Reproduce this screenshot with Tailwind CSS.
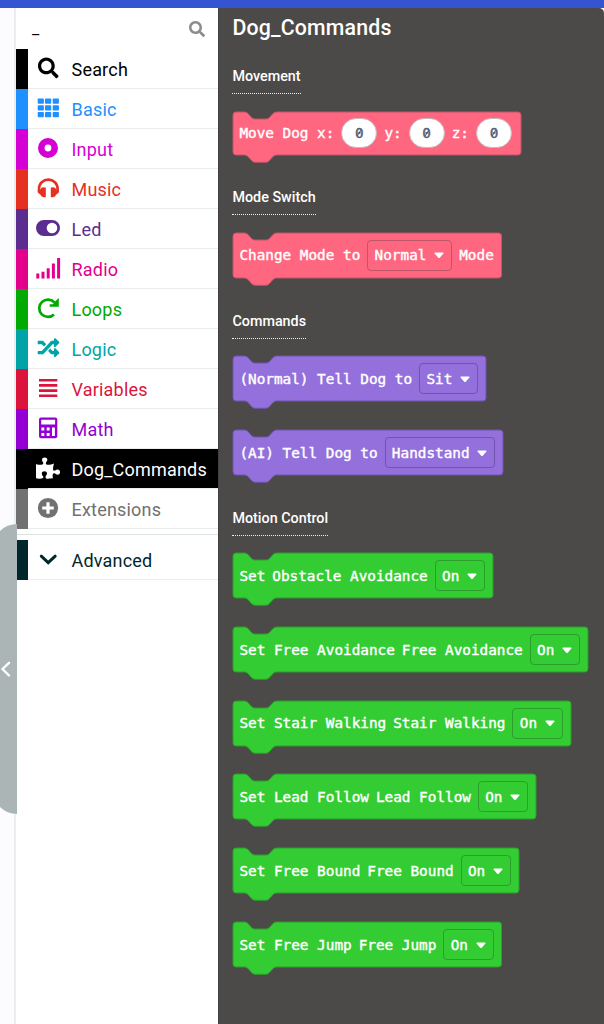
<!DOCTYPE html>
<html lang="en">
<head>
<meta charset="utf-8">
<title>Dog_Commands</title>
<script src="https://cdn.jsdelivr.net/npm/@tailwindcss/browser@4"></script>
</head>
<body class="relative flex h-[1024px] w-[604px] flex-col overflow-hidden bg-white font-['Roboto',sans-serif]">
<header class="h-2 shrink-0 bg-[#3454d1]"></header>
<div class="flex min-h-0 flex-1">
  <div class="w-4 shrink-0 border-r-2 border-[#ebedf0] bg-[#fcfcff]"></div>
  <aside class="flex w-[202px] shrink-0 flex-col bg-white">
    <div class="flex h-[41px] shrink-0 items-center justify-between pl-4 pr-[13px]">
      <span class="text-[16px] leading-none text-black">_</span>
      <svg class="size-4" viewBox="0 0 512 512" fill="#8c8c8c"><path d="M505 442.700L405.300 343c-4.500-4.500-10.600-7-17-7H372c27.600-35.300 44-79.700 44-128C416 93.100 322.900 0 208 0S0 93.100 0 208s93.100 208 208 208c48.300 0 92.700-16.400 128-44v16.300c0 6.400 2.500 12.500 7 17l99.700 99.700c9.400 9.400 24.600 9.400 33.900 0l28.300-28.300c9.400-9.400 9.400-24.600.1-34zM208 336c-70.700 0-128-57.200-128-128 0-70.700 57.200-128 128-128 70.700 0 128 57.200 128 128 0 70.700-57.200 128-128 128z"/></svg>
    </div>
    <nav id="categories"></nav>
    <div class="mt-[5px] h-px bg-[#dfe2e4]"></div>
    <nav id="advanced" class="mt-[5px]"></nav>
  </aside>
  <main class="flex-1 rounded-tr-[5px] border-l border-[#424140] bg-[#4c4a48] pl-[13.400px]">
    <h1 class="pt-[7px] text-[21.300px] font-medium leading-[26px] tracking-[0.180px] text-white">Dog_Commands</h1>
    <div id="flyout"></div>
  </main>
</div>
<div class="absolute -left-[7px] top-[524px] flex h-[290px] w-6 items-center rounded-l-[24px] bg-[#abb5b6] pl-[7px]">
  <svg class="h-4 w-3" viewBox="0 0 12 16" fill="none" stroke="#fff" stroke-width="2.400" stroke-linecap="round" stroke-linejoin="round"><path d="M9 1.800L2.500 8L9 14.500"/></svg>
</div>
<script>
const icons = {
  search: '<path transform="translate(2 .6) scale(.0402)" d="M505 442.700L405.300 343c-4.500-4.500-10.600-7-17-7H372c27.600-35.300 44-79.700 44-128C416 93.100 322.900 0 208 0S0 93.100 0 208s93.100 208 208 208c48.300 0 92.700-16.400 128-44v16.300c0 6.400 2.500 12.500 7 17l99.700 99.700c9.400 9.400 24.600 9.400 33.900 0l28.300-28.300c9.400-9.400 9.400-24.600.1-34zM208 336c-70.700 0-128-57.200-128-128 0-70.700 57.200-128 128-128 70.700 0 128 57.200 128 128 0 70.700-57.200 128-128 128z"/>',
  grid: [1.500, 8.300, 15].map(y => [1.700, 9, 16.700].map(x => `<rect x="${x}" y="${y}" width="6.200" height="5.300" rx=".8"/>`).join('')).join(''),
  dot: '<path fill-rule="evenodd" d="M12 1a10 10 0 1 0 0 20a10 10 0 1 0 0-20zM12 7.600a3.400 3.400 0 1 1 0 6.800a3.400 3.400 0 1 1 0-6.800z"/>',
  headphones: '<path d="M3 15V11.800a9.300 9.200 0 0 1 18.600 0V15" fill="none" stroke="currentColor" stroke-width="2.600"/><path d="M9.800 10.400v9.800H8.200a3.800 3.800 0 0 1-3.900-2.600l-2.400-1.800v-3l2.400-.4a3.800 3.800 0 0 1 3.900-2zM14.800 10.400v9.800h1.600a3.800 3.800 0 0 0 3.900-2.600l2.400-1.800v-3l-2.400-.4a3.800 3.800 0 0 0-3.900-2z"/>',
  toggle: '<path fill-rule="evenodd" d="M8 3h8a8 8 0 0 1 0 16H8A8 8 0 0 1 8 3zM16 5.700a5.300 5.300 0 1 0 0 10.600a5.300 5.300 0 1 0 0-10.600z"/>',
  signal: '<path d="M.3 16.500h3v5h-3zM5.500 14.700h3v6.800h-3zM10.700 11.300h3v10.200h-3zM15.900 6.500h3v15h-3zM21.100 1h3v20.500h-3z"/>',
  redo: '<path d="M18 17.500A8.700 8.700 0 1 1 18.600 5.600" fill="none" stroke="currentColor" stroke-width="2.700"/><path d="M20 3.500L22.800 1v8.800H13.700V7.200H17z"/>',
  shuffle: '<path transform="translate(1.700 -.2) scale(.0422)" d="M504.971 359.029c9.373 9.373 9.373 24.569 0 33.941l-80 79.984c-15.010 15.010-40.971 4.490-40.971-16.971V416h-58.785a12.004 12.004 0 0 1-8.773-3.812l-70.556-75.596 53.333-57.143L352 336h32v-39.981c0-21.438 25.943-31.998 40.971-16.971l80 79.981zM12 176h84l52.781 56.551 53.333-57.143-70.556-75.596A11.999 11.999 0 0 0 122.785 96H12c-6.627 0-12 5.373-12 12v56c0 6.627 5.373 12 12 12zm372 0v39.984c0 21.460 25.961 31.980 40.971 16.971l80-79.984c9.373-9.373 9.373-24.569 0-33.941l-80-79.981C409.943 24.021 384 34.582 384 56.019V96h-58.785a12.004 12.004 0 0 0-8.773 3.812L96 336H12c-6.627 0-12 5.373-12 12v56c0 6.627 5.373 12 12 12h110.785c3.326 0 6.503-1.381 8.773-3.812L352 176h32z" transform-origin="0 0"/>',
  lines: '<path d="M3 1.900h18.300v2.700H3zM3 7h18.300v2.700H3zM3 12.200h18.300v2.700H3zM3 17.400h18.300v2.700H3z"/>',
  calculator: '<path fill-rule="evenodd" d="M5 .6h14.300a2 2 0 0 1 2 2v16.700a2 2 0 0 1-2 2H5a2 2 0 0 1-2-2V2.600a2 2 0 0 1 2-2zM5.200 2.800v4.700h13.900V2.800zM5.400 10.600v2.800h2.900v-2.800zM10.700 10.600v2.800h2.900v-2.800zM16 10.600v8.300h2.900v-8.300zM5.400 15.900v3h2.900v-3zM10.700 15.900v3h2.900v-3z"/>',
  puzzle: '<path transform="translate(0 .4) scale(.0417)" d="M519.442 288.651c-41.519 0-59.500 31.593-82.058 31.593C377.409 320.244 432 144 432 144s-196.288 80-196.288-3.297c0-35.827 36.288-46.250 36.288-85.985C272 19.216 243.885 0 210.539 0c-34.654 0-66.366 18.891-66.366 56.346 0 41.364 31.711 59.277 31.711 81.750C175.885 207.719 0 166.758 0 166.758v333.237s178.635 41.047 178.635-28.662c0-22.473-40-40.107-40-81.471 0-37.456 29.250-56.346 63.577-56.346 33.673 0 61.788 19.216 61.788 54.717 0 39.735-36.288 50.158-36.288 85.985 0 60.803 129.675 25.730 181.230 25.730 0 0-34.725-120.101 25.827-120.101 35.962 0 46.423 36.152 86.308 36.152C556.712 416 576 387.990 576 354.443c0-34.199-18.962-65.792-56.558-65.792z"/>',
  plus: '<circle cx="12" cy="11" r="10.100"/><path d="M12 5.200v11.600M6.200 11h11.600" stroke="#fff" stroke-width="3.200"/>',
  chevron: '<path d="M5.300 8.200L12.200 14.600L19.200 8.200" fill="none" stroke="currentColor" stroke-width="3" stroke-linecap="round" stroke-linejoin="miter"/>'
};
const row = ([name, color, icon, on]) => `
  <div class="flex h-10" style="background:linear-gradient(${color},${color}) left/12px 100% no-repeat">
    <div class="ml-3 flex flex-1 items-center border-b border-[#e9edee]" style="color:${on ? '#fff' : color};${on ? 'background:#000' : ''}">
      <svg class="ml-2 mt-px size-6 shrink-0 overflow-visible" viewBox="0 0 24 24" fill="currentColor">${icons[icon]}</svg>
      <span class="ml-[11.500px] mt-[2px] text-[18px] leading-6 tracking-[0.200px] whitespace-nowrap">${name}</span>
    </div>
  </div>`;
document.getElementById('categories').innerHTML = [
  ['Search', '#000000', 'search'], ['Basic', '#1e90ff', 'grid'], ['Input', '#d400d4', 'dot'],
  ['Music', '#e63022', 'headphones'], ['Led', '#5c2d91', 'toggle'], ['Radio', '#e3008c', 'signal'],
  ['Loops', '#00aa00', 'redo'], ['Logic', '#00a4a6', 'shuffle'], ['Variables', '#dc143c', 'lines'],
  ['Math', '#9400d3', 'calculator'], ['Dog_Commands', '#000000', 'puzzle', true], ['Extensions', '#717171', 'plus']
].map(row).join('');
document.getElementById('advanced').innerHTML = row(['Advanced', '#00272b', 'chevron']);

const pink = ['#ff6680', '#bf5568'], purple = ['#9370db', '#7153b0'], green = ['#33cc33', '#2b9e2b'];
const heading = (text, mt) => `<div class="flex" style="margin-top:${mt}px"><h2 class="h-[27px] border-b border-dotted border-white/90 text-[14.350px] font-medium leading-[20px] text-white">${text}</h2></div>`;
const part = (p, line) => {
  if (p.menu) return `<span class="flex h-[31px] items-center rounded-[4px] border pl-[6.300px]" style="border-color:${line}">${p.menu}<svg class="ml-[7.800px] mr-[7px] mt-px h-[7px] w-[10px]" viewBox="0 0 10 7" fill="#fff"><path d="M1.200 .5h7.600q1 0 .6 1L6 5.500q-1 1-2 0L.6 1.500q-.4-1 .6-1z"/></svg></span>`;
  if (p.num) return `<span class="relative flex h-[29.500px] w-[36px] items-center justify-center rounded-full border border-[#c9b5ba] bg-white text-[#575e75]">${p.num}<svg class="absolute inset-0 m-auto h-3 w-2" viewBox="0 0 8 12" stroke="#575e75" stroke-width="1.200"><path d="M2 9L6 3"/></svg></span>`;
  return `<span class="whitespace-pre">${p}</span>`;
};
const block = ([fill, line], w, h, mt, parts) => `
  <div class="relative" style="width:${w}px;height:${h}px;margin-top:${mt}px">
    <svg class="absolute left-[0.500px] top-0 overflow-visible" width="${w}" height="${h}"><path fill="${fill}" stroke="${line}" d="M0 3Q0 0 3 0H11.500Q13.500 0 15 1.500L18.500 5.500Q20 7 22 7H33Q35 7 36.500 5.500L40 1.500Q41.500 0 43.500 0H${w - 3}Q${w} 0 ${w} 3V${h - 3}Q${w} ${h} ${w - 3} ${h}H43.500Q41.500 ${h} 40 ${h + 1.500}L36.500 ${h + 5.500}Q35 ${h + 7.300} 33 ${h + 7.300}H22Q20 ${h + 7.300} 18.500 ${h + 5.500}L15 ${h + 1.500}Q13.500 ${h} 11.500 ${h}H3Q0 ${h} 0 ${h - 3}Z"/></svg>
    <div class="relative flex h-full items-center gap-[7px] pl-[7px] font-['DejaVu_Sans_Mono',monospace] text-[14.350px] leading-5 text-white [-webkit-text-stroke:0.4px_currentColor]">${parts.map(p => part(p, line)).join('')}</div>
  </div>`;
const on = { menu: 'On' }, zero = { num: '0' };
document.getElementById('flyout').innerHTML =
  heading('Movement', 26) + block(pink, 288, 43, 17.500, ['Move Dog x:', zero, 'y:', zero, 'z:', zero]) +
  heading('Mode Switch', 33.500) + block(pink, 268.500, 45, 17.500, ['Change Mode to', { menu: 'Normal' }, 'Mode']) +
  heading('Commands', 34) + block(purple, 253, 45, 17.500, ['(Normal) Tell Dog to', { menu: 'Sit' }]) +
  block(purple, 270, 45, 29, ['(AI) Tell Dog to', { menu: 'Handstand' }]) +
  heading('Motion Control', 33.500) + block(green, 260, 45, 17.500, ['Set', 'Obstacle Avoidance', on]) +
  block(green, 355, 45, 29, ['Set Free Avoidance', 'Free Avoidance', on]) +
  block(green, 338, 45, 28.700, ['Set Stair Walking', 'Stair Walking', on]) +
  block(green, 303, 45, 28.800, ['Set Lead Follow', 'Lead Follow', on]) +
  block(green, 286, 45, 28.800, ['Set Free Bound', 'Free Bound', on]) +
  block(green, 268.500, 45, 28.800, ['Set Free Jump', 'Free Jump', on]);
</script>
</body>
</html>
